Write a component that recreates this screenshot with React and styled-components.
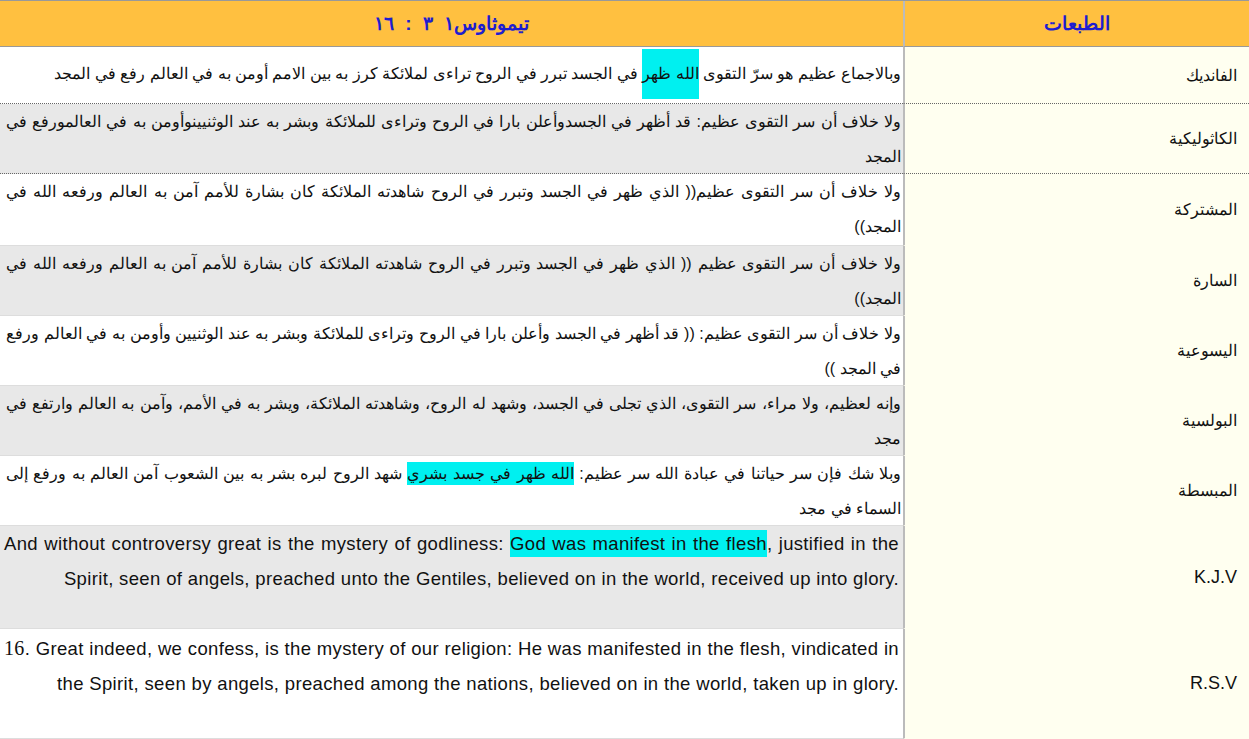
import React from "react";
import styled, { createGlobalStyle } from "styled-components";

const G = createGlobalStyle`
  body { margin: 0; background: #fff; font-family: "Liberation Sans", Arial, sans-serif; }
`;
const Table = styled.div`
  display: grid; grid-template-columns: 903px 1fr; width: 1249px;
  border-top: 1px solid #999;
`;
const Head = styled.div`
  background: #ffc040; color: #1d1dd0; height: 45px; display: flex; align-items: center;
  justify-content: center; font-size: 19px; font-weight: bold; direction: rtl; word-spacing: 6px;
  border-bottom: 1px solid #999; border-left: ${p => p.l ? "2px solid #bbb" : "none"};
`;
const Cell = styled.div`
  background: ${p => p.grey ? "#e8e8e8" : "#fff"}; height: ${p => p.h}px; box-sizing: border-box;
  direction: ${p => p.en ? "ltr" : "rtl"}; text-align: justify; text-align-last: right;
  font-size: ${p => p.en ? "18.5px" : "16px"}; line-height: 35px; color: #111;
  letter-spacing: ${p => p.en ? "0.35px" : "0"};
  padding: ${p => p.en ? "0 4px 0 4px" : "0 2px 0 6px"}; border-bottom: 1px solid ${p => p.dot ? "#666" : "#ddd"};
  border-bottom-style: ${p => p.dot ? "dotted" : "solid"};
`;
const Label = styled.div`
  background: #fffff0; height: ${p => p.h}px; box-sizing: border-box; display: flex; align-items: center;
  justify-content: flex-end; padding-right: 12px; font-size: ${p => p.en ? "18px" : "16px"}; color: #111;
  border-left: 2px solid #bbb; border-bottom: 1px solid ${p => p.dot ? "#666" : "#fffff0"};
  border-bottom-style: ${p => p.dot ? "dotted" : "solid"};
`;
const Hi = styled.span` background: #00f0f0; padding: 3px 0; `;
const Tall = styled.span` background: #00f0f0; display: inline-block; line-height: 50px; `;
const Block = styled.span` display: block; padding-top: ${p => p.t || 0}px; `;
const Num = styled.span` font-family: "Liberation Serif", serif; font-size: 20px; `;

const rows = [
  { l: "الفانديك", h: 57, c: <Block t={2}>وبالاجماع عظيم هو سرّ التقوى <Tall>الله ظهر</Tall> في الجسد تبرر في الروح تراءى لملائكة كرز به بين الامم أومن به في العالم رفع في المجد</Block>, dot: true },
  { l: "الكاثوليكية", h: 70, grey: true, c: "ولا خلاف أن سر التقوى عظيم: قد أظهر في الجسدوأعلن بارا في الروح وتراءى للملائكة وبشر به عند الوثنيينوأومن به في العالمورفع في المجد", dot: true },
  { l: "المشتركة", h: 72, c: "ولا خلاف أن سر التقوى عظيم(( الذي ظهر في الجسد وتبرر في الروح  شاهدته الملائكة  كان بشارة للأمم  آمن به العالم ورفعه الله في المجد))" },
  { l: "السارة", h: 70, grey: true, c: "ولا خلاف أن سر التقوى عظيم (( الذي ظهر في الجسد وتبرر في الروح  شاهدته الملائكة  كان بشارة للأمم  آمن به العالم ورفعه الله في المجد))" },
  { l: "اليسوعية", h: 70, c: "ولا خلاف أن سر التقوى عظيم: (( قد أظهر في الجسد وأعلن بارا في الروح وتراءى للملائكة وبشر به عند الوثنيين وأومن به في العالم ورفع في المجد ))" },
  { l: "البولسية", h: 70, grey: true, c: "وإنه لعظيم، ولا مراء، سر التقوى، الذي تجلى في الجسد، وشهد له الروح، وشاهدته الملائكة، ويشر به في الأمم، وآمن به العالم وارتفع في مجد" },
  { l: "المبسطة", h: 70, c: <>وبلا شك  فإن سر حياتنا في عبادة الله سر عظيم: <Hi>الله ظهر في جسد بشري</Hi>  شهد الروح لبره  بشر به بين الشعوب  آمن العالم به ورفع إلى السماء في مجد</> },
  { l: "K.J.V", en: true, h: 103, grey: true, c: <>And without controversy great is the mystery of godliness: <Hi>God was manifest in the flesh</Hi>, justified in the Spirit, seen of angels, preached unto the Gentiles, believed on in the world, received up into glory.</> },
  { l: "R.S.V", en: true, h: 110, c: <Block t={2}><Num>16</Num>. Great indeed, we confess, is the mystery of our religion: He was manifested in the flesh, vindicated in the Spirit, seen by angels, preached among the nations, believed on in the world, taken up in glory.</Block> },
];

export default function App() {
  return (
    <>
      <G />
      <Table>
        <Head>تيموثاوس١ ٣ : ١٦</Head>
        <Head l>الطبعات</Head>
        {rows.map((r, i) => (
          <React.Fragment key={i}>
            <Cell h={r.h} grey={r.grey} en={r.en} dot={r.dot}>{r.c}</Cell>
            <Label h={r.h} en={r.en} dot={r.dot}>{r.l}</Label>
          </React.Fragment>
        ))}
      </Table>
    </>
  );
}
